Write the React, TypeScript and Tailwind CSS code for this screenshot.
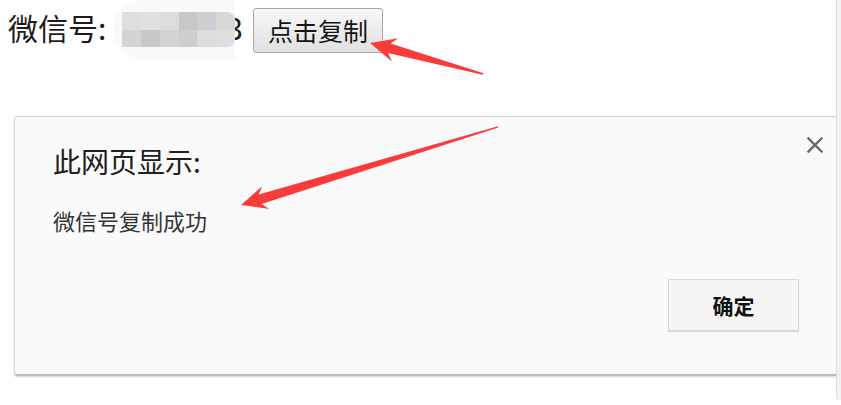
import React from 'react';

const mosaic = [
  ['#dedede', '#dfe0e0', '#dcdcdc', '#c8c7c6', '#cdcfd2', '#d8d7d4'],
  ['#d4d4d4', '#c8c8c8', '#d3d3d3', '#cfcdcd', '#dcdcde', '#e0dfdd'],
];

const Arrows = () => (
  <svg className="pointer-events-none absolute left-0 top-0" width="841" height="405" viewBox="0 0 841 405">
    <g fill="#f93b3b">
      {/* arrow pointing at the copy button */}
      <polygon points="370,43 398.3,38.3 390.6,43.5 483.5,73.2 482.5,74.8 388,53.1 391.9,61.5" />
      {/* arrow pointing at the alert message */}
      <polygon points="241,205 262.4,186 258.7,194.4 498,126.3 498.4,127.6 261.6,204 269.4,209" />
    </g>
  </svg>
);

const App = () => {
  return (
    <div className="relative flex h-[405px] w-[841px] overflow-hidden bg-white font-['Noto_Sans_CJK_SC','Noto_Sans',sans-serif]">
      <div className="flex-1">
        {/* wechat id row */}
        <div className="flex h-[60px] items-start">
          <div className="ml-[8px] mt-[12px] w-[105px] text-[30px] leading-[30px] text-[#1c1c1c]">微信号:</div>
          <div className="flex h-[60px] w-[122px] rounded-l-[30px] bg-[#f8f9fa] pl-[9px] pt-[12px]">
            <div className="grid h-[35px] w-[113px] grid-cols-6 grid-rows-2 overflow-hidden rounded-r-[8px]">
              {mosaic.flat().map((c, i) => (
                <div key={i} style={{ backgroundColor: c }} />
              ))}
            </div>
          </div>
          <div className="mt-[12px] flex w-[8px] justify-end overflow-hidden text-[30px] leading-[30px] text-[#1c1c1c]">3</div>
          <button className="ml-[10px] mt-[8px] h-[45px] w-[130px] rounded-[3px] border border-[#a6a6a6] bg-gradient-to-b from-[#f7f7f7] to-[#e1e1e1] text-[25px] leading-[25px] text-[#151515]">
            点击复制
          </button>
        </div>

        {/* alert dialog */}
        <div className="ml-[14px] mt-[56px] h-[260px] w-[822px] rounded-l-[4px] border border-r-0 border-[#d5d5d5] border-b-2 border-b-[#bdbdbd] bg-[#fafafa] pl-[38px] pr-[12px] pt-[20px] shadow-[0_1px_2px_rgba(0,0,0,0.18)]">
          <div className="flex items-start justify-between">
            <div className="mt-[10px] text-[28px] leading-[28px] text-[#202020]">此网页显示:</div>
            <svg width="16" height="16" viewBox="0 0 16 16" className="mr-[1px]">
              <path d="M1.5 1.5 L14.5 14.5 M14.5 1.5 L1.5 14.5" stroke="#6a6a6a" strokeWidth="2.4" strokeLinecap="square" />
            </svg>
          </div>
          <div className="mt-[34px] text-[22px] leading-[22px] text-[#333]">微信号复制成功</div>
          <div className="mt-[48px] flex justify-end pr-[25px]">
            <button className="h-[52px] w-[131px] border border-[#d9d9d9] bg-[#f5f5f5] text-[21px] font-bold leading-[21px] text-[#111] shadow-[0_1px_1px_rgba(0,0,0,0.12)]">
              确定
            </button>
          </div>
        </div>
      </div>
      <div className="h-[400px] w-[5px] rounded-bl-[3px] border-l border-[#dedede] bg-[#f1f1f1]" />
      <Arrows />
    </div>
  );
};

export default App;
